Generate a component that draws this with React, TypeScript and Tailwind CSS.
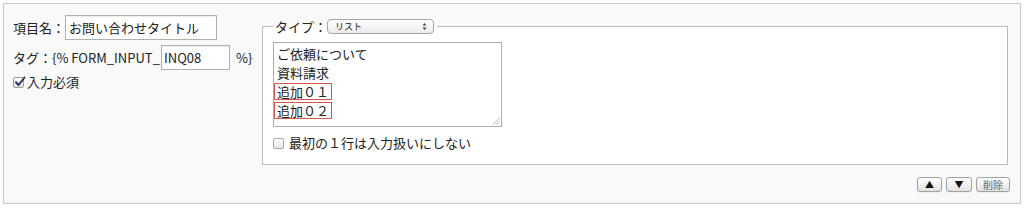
import React from "react";

function CheckedBox() {
  return (
    <span className="relative inline-block w-[11px] h-[11px] rounded-[2px] border border-[#9a9a9a] bg-gradient-to-b from-white to-[#e4e4e4] shrink-0">
      <svg className="absolute -top-[2px] left-[0px]" width="12" height="12" viewBox="0 0 12 12">
        <path d="M2 6.2 L4.6 9 L10.5 1.5" fill="none" stroke="#23345f" strokeWidth="2" strokeLinecap="round" strokeLinejoin="round" />
      </svg>
    </span>
  );
}

function EmptyBox() {
  return (
    <span className="inline-block w-[11px] h-[11px] rounded-[2px] border border-[#a8a8a8] bg-gradient-to-b from-white to-[#e6e6e6] shrink-0" />
  );
}

function Btn({ children, w, gray }: { children: React.ReactNode; w: string; gray?: boolean }) {
  return (
    <div
      className={`${w} h-[15px] rounded-[3px] border border-[#a0a0a0] bg-gradient-to-b from-white to-[#e2e2e2] flex items-center justify-center ${gray ? "text-[#666] text-[10px]" : "text-[#111] text-[9px]"} leading-none shadow-[0_1px_0_rgba(0,0,0,0.05)]`}
    >
      {children}
    </div>
  );
}

export default function App() {
  return (
    <div className="font-['Noto_Sans_CJK_JP',sans-serif] text-[13px] text-[#222] pt-[3px] pl-[3px]">
      <div className="w-[1018px] h-[201px] border border-[#c8c8c8] bg-[#f9f9f9] flex">
        {/* Left column */}
        <div className="w-[258px] shrink-0 pl-[9px] pt-[11px] flex flex-col">
          <div className="flex items-center h-[25px]">
            <span className="w-[52px] leading-[19px]">項目名：</span>
            <div className="w-[152px] h-[25px] border border-[#b0b0b0] bg-white shadow-[inset_0_1px_1px_rgba(0,0,0,0.08)] flex items-center pl-[3px] leading-[19px]">
              お問い合わせタイトル
            </div>
          </div>
          <div className="flex items-center h-[25px] mt-[5px]">
            <span className="leading-[19px] w-[148px] whitespace-nowrap">タグ：{"{% FORM_INPUT_"}</span>
            <div className="w-[69px] h-[25px] border border-[#b0b0b0] bg-white shadow-[inset_0_1px_1px_rgba(0,0,0,0.08)] flex items-center pl-[2px] leading-[19px]">
              INQ08
            </div>
            <span className="ml-[6px] leading-[19px]">{"%}"}</span>
          </div>
          <div className="flex items-center h-[16px] mt-[4px] gap-[3px]">
            <CheckedBox />
            <span className="leading-[16px]">入力必須</span>
          </div>
        </div>

        {/* Right column */}
        <div className="flex-1 pt-[15px] pr-[10px] flex flex-col">
          <fieldset className="mr-[2px] border border-[#bcbcbc] bg-white pl-[10px] pt-[8px] pb-[12px]">
            <legend className="pl-[2px] pr-[3px] flex items-center h-[15px] leading-[15px]">
              <span className="w-[52px]">タイプ：</span>
              <div className="w-[107px] h-[15px] rounded-[4px] border border-[#a6a6a6] bg-gradient-to-b from-white to-[#ebebeb] flex items-center justify-between pl-[7px] pr-[6px]">
                <span className="text-[9px] leading-none text-[#111]">リスト</span>
                <svg width="5" height="9" viewBox="0 0 5 9">
                  <path d="M0.5 3.5 L2.5 1 L4.5 3.5 Z" fill="#444" />
                  <path d="M0.5 5.5 L2.5 8 L4.5 5.5 Z" fill="#444" />
                </svg>
              </div>
            </legend>
            <div className="relative w-[229px] h-[85px] border border-[#acacac] bg-white pt-[2px] flex flex-col gap-[2px] leading-[15px]">
              <div className="h-[17px] border border-transparent px-[2px] self-start">ご依頼について</div>
              <div className="h-[17px] border border-transparent px-[2px] self-start">資料請求</div>
              <div className="h-[17px] border border-[#d9534f] px-[2px] self-start">追加０１</div>
              <div className="h-[17px] border border-[#d9534f] px-[2px] self-start">追加０２</div>
              <svg className="absolute right-[1px] bottom-[1px]" width="8" height="8" viewBox="0 0 8 8">
                <path d="M7.5 1 L1 7.5 M7.5 4.5 L4.5 7.5" stroke="#999" strokeWidth="0.8" />
              </svg>
            </div>
            <div className="flex items-center h-[18px] mt-[7px] gap-[5px]">
              <EmptyBox />
              <span className="leading-[18px]">最初の１行は入力扱いにしない</span>
            </div>
          </fieldset>
          <div className="flex justify-end gap-[4px] mt-[12px]">
            <Btn w="w-[25px]">▲</Btn>
            <Btn w="w-[26px]">▼</Btn>
            <Btn w="w-[34px]" gray>削除</Btn>
          </div>
        </div>
      </div>
    </div>
  );
}
